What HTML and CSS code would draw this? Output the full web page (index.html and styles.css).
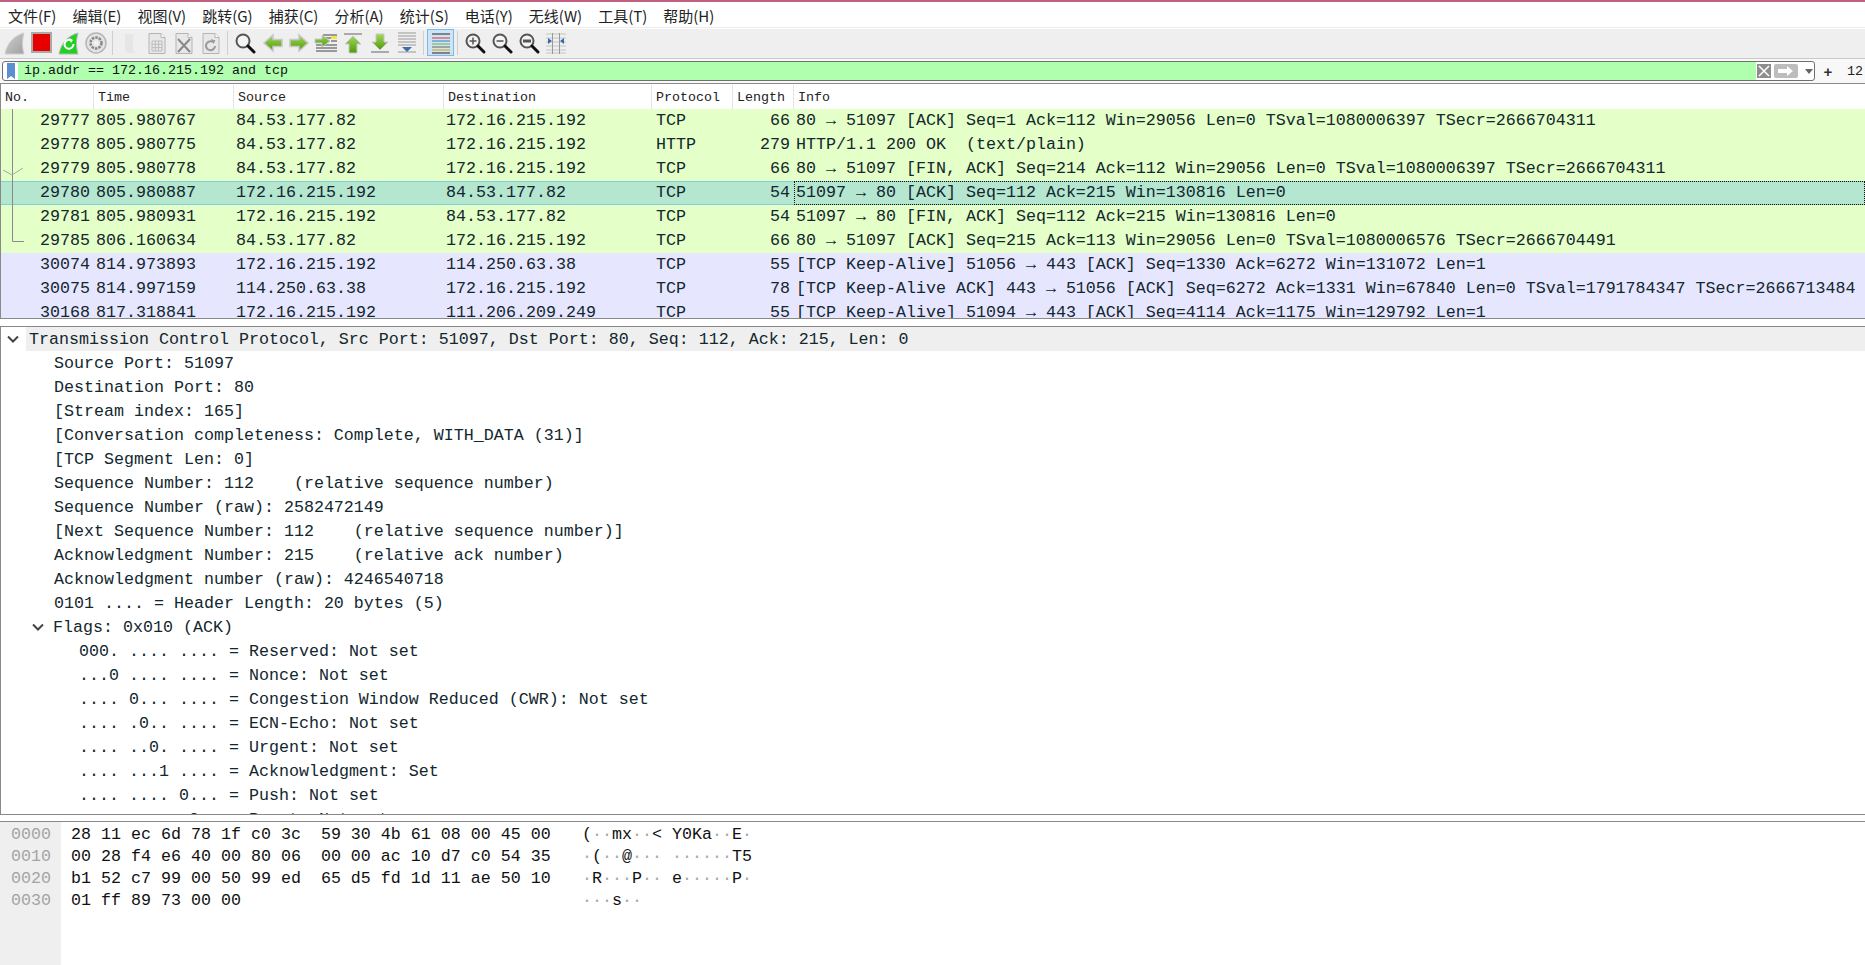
FILE: index.html
```html
<!DOCTYPE html>
<html lang="zh">
<head>
<meta charset="utf-8">
<title>Wireshark</title>
<link rel="stylesheet" href="styles.css">
</head>
<body>
<svg class="defs" width="0" height="0">
  <defs>
    <linearGradient id="gGreen" x1="0" y1="0" x2="0" y2="1"><stop offset="0" stop-color="#a4d65e"/><stop offset="1" stop-color="#4f9a06"/></linearGradient>
    <linearGradient id="gFin" x1="0" y1="0" x2="1" y2="1"><stop offset="0" stop-color="#d0d0d0"/><stop offset="1" stop-color="#a0a0a0"/></linearGradient>
    <g id="glass"><circle cx="10" cy="10" r="6.5" fill="#f4f4f4" stroke="#555" stroke-width="2"/><path d="M15 15l6 6" stroke="#111" stroke-width="3" stroke-linecap="round"/></g>
    <g id="doc"><path d="M4 2.500h12l4 4v16H4z" fill="#e8e8e8" stroke="#b4b4b4"/><path d="M16 2.500v4h4" fill="#fff" stroke="#b4b4b4"/></g>
    <path id="arrowR" d="M1 8.500h9V4l9 8-9 8v-4.500H1z" fill="url(#gGreen)" stroke="#c8c8c8" stroke-width="1.500"/>
  </defs>
</svg>
<div class="topline"></div>
<nav class="menu">
  <span class="menu-item">文件(F)</span><span class="menu-item">编辑(E)</span><span class="menu-item">视图(V)</span><span class="menu-item">跳转(G)</span><span class="menu-item">捕获(C)</span><span class="menu-item">分析(A)</span><span class="menu-item">统计(S)</span><span class="menu-item">电话(Y)</span><span class="menu-item">无线(W)</span><span class="menu-item">工具(T)</span><span class="menu-item">帮助(H)</span>
</nav>
<div class="toolbar">
  <span class="tool"><svg width="24" height="24" viewBox="0 0 24 24"><path d="M2 23C4 13 10 5 21 2c-2 7-2 14 0 21z" fill="url(#gFin)" stroke="#cfcfcf"/></svg></span>
  <span class="tool"><svg width="24" height="24" viewBox="0 0 24 24"><rect x="2" y="2" width="19" height="19" fill="#e60000" stroke="#aaa" stroke-width="2"/></svg></span>
  <span class="tool"><svg width="24" height="24" viewBox="0 0 24 24"><path d="M2 23C4 13 10 5 21 2c-2 7-2 14 0 21z" fill="#22cf22" stroke="#b8b8b8"/><path d="M16.500 13a4.500 4.500 0 1 1-2-3.500" fill="none" stroke="#fff" stroke-width="2"/><path d="M12 7l4 2-2 3z" fill="#fff"/></svg></span>
  <span class="tool"><svg width="24" height="24" viewBox="0 0 24 24"><circle cx="12" cy="12" r="10" fill="#e4e4e4" stroke="#b5b5b5" stroke-width="1.500"/><circle cx="12" cy="12" r="5.500" fill="none" stroke="#888" stroke-width="2.500" stroke-dasharray="2.500 1"/><circle cx="12" cy="12" r="2.500" fill="#f2f2f2"/></svg></span>
  <span class="sep"></span>
  <span class="tool"><svg width="24" height="24" viewBox="0 0 24 24"><path d="M7 3h10l-2 3v13l2 3H9l-2-3z" fill="#e6e6e6"/></svg></span>
  <span class="tool"><svg width="24" height="24" viewBox="0 0 24 24"><use href="#doc"/><path d="M7 10h10v10H7zM7 13.300h10M7 16.600h10M10.300 10v10M13.600 10v10" fill="none" stroke="#b4b4b4" stroke-width=".8"/></svg></span>
  <span class="tool"><svg width="24" height="24" viewBox="0 0 24 24"><use href="#doc"/><path d="M6 8l12 13M18 8L6 21" stroke="#888" stroke-width="2"/></svg></span>
  <span class="tool"><svg width="24" height="24" viewBox="0 0 24 24"><use href="#doc"/><path d="M16 15a4.500 4.500 0 1 1-2-4" fill="none" stroke="#999" stroke-width="2"/><path d="M12 8l4.500 1.500-2 3.500z" fill="#999"/></svg></span>
  <span class="sep"></span>
  <span class="tool"><svg width="24" height="24" viewBox="0 0 24 24"><use href="#glass"/></svg></span>
  <span class="tool"><svg width="24" height="24" viewBox="0 0 24 24"><use href="#arrowR" transform="translate(23 0) scale(-1 1)"/></svg></span>
  <span class="tool"><svg width="24" height="24" viewBox="0 0 24 24"><use href="#arrowR" x="2"/></svg></span>
  <span class="tool"><svg width="24" height="24" viewBox="0 0 24 24"><path d="M9 4h14M9 7h14M9 10h3M17 10h6M2 14h21M2 17h21M2 20h21" stroke="#444" stroke-width="1.200"/><path d="M17 5h6v3h-6z" fill="#f2e34c"/><path d="M1 8h7V4l8 6-8 6v-4H1z" fill="url(#gGreen)" stroke="#c8c8c8"/></svg></span>
  <span class="tool"><svg width="24" height="24" viewBox="0 0 24 24"><path d="M3 3h18" stroke="#aaa" stroke-width="2"/><path d="M12 5l8 8h-4v9H8v-9H4z" fill="url(#gGreen)" stroke="#c8c8c8"/></svg></span>
  <span class="tool"><svg width="24" height="24" viewBox="0 0 24 24"><path d="M3 21h18" stroke="#aaa" stroke-width="2"/><path d="M12 19l8-8h-4V3H8v8H4z" fill="url(#gGreen)" stroke="#c8c8c8"/></svg></span>
  <span class="tool"><svg width="24" height="24" viewBox="0 0 24 24"><path d="M3 2h18M3 5h18M3 8h18M3 11h18M3 14h18M3 21h18" stroke="#999"/><path d="M7 16h10l-5 5z" fill="#3a6ea5"/></svg></span>
  <span class="sep"></span>
  <span class="tool tool-on"><svg width="24" height="24" viewBox="0 0 24 24"><path d="M3 3h18" stroke="#444" stroke-width="1.200"/><path d="M3 7h18" stroke="#e05050" stroke-width="1.200"/><path d="M3 10h18" stroke="#5588cc" stroke-width="1.200"/><path d="M3 13h18" stroke="#7fc040" stroke-width="1.200"/><path d="M3 16h18" stroke="#777" stroke-width="1.200"/><path d="M3 19h18" stroke="#d8a820" stroke-width="1.200"/><path d="M3 22h18" stroke="#444" stroke-width="1.200"/></svg></span>
  <span class="sep"></span>
  <span class="tool"><svg width="24" height="24" viewBox="0 0 24 24"><use href="#glass"/><path d="M6.500 10h7M10 6.500v7" stroke="#555" stroke-width="1.500"/></svg></span>
  <span class="tool"><svg width="24" height="24" viewBox="0 0 24 24"><use href="#glass"/><path d="M6.500 10h7" stroke="#555" stroke-width="1.500"/></svg></span>
  <span class="tool"><svg width="24" height="24" viewBox="0 0 24 24"><use href="#glass"/><path d="M6 10h8" stroke="#555" stroke-width="3"/></svg></span>
  <span class="tool"><svg width="24" height="24" viewBox="0 0 24 24"><path d="M2 3h20M2 7h20M2 11h20M2 15h20M2 19h20M2 22h20" stroke="#c4c4c4"/><path d="M8.500 2v21M15.500 2v21" stroke="#999"/><path d="M4 7l4 3-4 3zM20 7l-4 3 4 3z" fill="#2f6fb0"/></svg></span>
</div>
<div class="filterbar">
  <div class="filter">
    <span class="bookmark"><svg width="10" height="16" viewBox="0 0 10 16"><path d="M1 0h8v16l-4-3-4 3z" fill="#5b8fd0"/></svg></span>
    <span class="filter-text">ip.addr == 172.16.215.192 and tcp</span>
    <span class="filter-btn"><svg width="14" height="14" viewBox="0 0 14 14"><rect width="14" height="14" fill="#8e8e8e"/><path d="M2 2l10 10M12 2L2 12" stroke="#fff" stroke-width="1.500"/></svg></span>
    <span class="filter-btn filter-go"><svg width="24" height="14" viewBox="0 0 24 14"><rect width="24" height="14" rx="2" fill="#bdbdbd"/><path d="M4 5h9V2l6 5-6 5V9H4z" fill="#fff"/></svg></span>
    <span class="filter-btn filter-drop"><svg width="8" height="5" viewBox="0 0 8 5"><path d="M0 0h8L4 5z" fill="#666"/></svg></span>
  </div>
  <span class="plus">+</span>
  <span class="twelve">12</span>
</div>
<section class="packets">
  <div class="pk-head"><span class="h">No.</span><span class="h">Time</span><span class="h">Source</span><span class="h">Destination</span><span class="h">Protocol</span><span class="h">Length</span><span class="h">Info</span></div>
  <div class="pk-body">
    <svg class="conv" width="26" height="134" viewBox="0 0 26 134"><path d="M12.500 0v132.500H24" fill="none" stroke="#8a8a8a"/><path d="M3 61l9 5 11-7" fill="none" stroke="#a9a9a9"/></svg>
    <div class="pk-row green"><span class="c num">29777</span><span class="c">805.980767</span><span class="c">84.53.177.82</span><span class="c">172.16.215.192</span><span class="c">TCP</span><span class="c num">66</span><span class="c">80 → 51097 [ACK] Seq=1 Ack=112 Win=29056 Len=0 TSval=1080006397 TSecr=2666704311</span></div>
    <div class="pk-row green"><span class="c num">29778</span><span class="c">805.980775</span><span class="c">84.53.177.82</span><span class="c">172.16.215.192</span><span class="c">HTTP</span><span class="c num">279</span><span class="c">HTTP/1.1 200 OK  (text/plain)</span></div>
    <div class="pk-row green"><span class="c num">29779</span><span class="c">805.980778</span><span class="c">84.53.177.82</span><span class="c">172.16.215.192</span><span class="c">TCP</span><span class="c num">66</span><span class="c">80 → 51097 [FIN, ACK] Seq=214 Ack=112 Win=29056 Len=0 TSval=1080006397 TSecr=2666704311</span></div>
    <div class="pk-row selected"><span class="c num">29780</span><span class="c">805.980887</span><span class="c">172.16.215.192</span><span class="c">84.53.177.82</span><span class="c">TCP</span><span class="c num">54</span><span class="c focus">51097 → 80 [ACK] Seq=112 Ack=215 Win=130816 Len=0</span></div>
    <div class="pk-row green"><span class="c num">29781</span><span class="c">805.980931</span><span class="c">172.16.215.192</span><span class="c">84.53.177.82</span><span class="c">TCP</span><span class="c num">54</span><span class="c">51097 → 80 [FIN, ACK] Seq=112 Ack=215 Win=130816 Len=0</span></div>
    <div class="pk-row green"><span class="c num">29785</span><span class="c">806.160634</span><span class="c">84.53.177.82</span><span class="c">172.16.215.192</span><span class="c">TCP</span><span class="c num">66</span><span class="c">80 → 51097 [ACK] Seq=215 Ack=113 Win=29056 Len=0 TSval=1080006576 TSecr=2666704491</span></div>
    <div class="pk-row blue"><span class="c num">30074</span><span class="c">814.973893</span><span class="c">172.16.215.192</span><span class="c">114.250.63.38</span><span class="c">TCP</span><span class="c num">55</span><span class="c">[TCP Keep-Alive] 51056 → 443 [ACK] Seq=1330 Ack=6272 Win=131072 Len=1</span></div>
    <div class="pk-row blue"><span class="c num">30075</span><span class="c">814.997159</span><span class="c">114.250.63.38</span><span class="c">172.16.215.192</span><span class="c">TCP</span><span class="c num">78</span><span class="c">[TCP Keep-Alive ACK] 443 → 51056 [ACK] Seq=6272 Ack=1331 Win=67840 Len=0 TSval=1791784347 TSecr=2666713484</span></div>
    <div class="pk-row blue"><span class="c num">30168</span><span class="c">817.318841</span><span class="c">172.16.215.192</span><span class="c">111.206.209.249</span><span class="c">TCP</span><span class="c num">55</span><span class="c">[TCP Keep-Alive] 51094 → 443 [ACK] Seq=4114 Ack=1175 Win=129792 Len=1</span></div>
  </div>
</section>
<section class="details">
  <div class="d-row l0"><svg class="chev" width="12" height="8" viewBox="0 0 12 8"><path d="M1 1.500l5 5 5-5" fill="none" stroke="#444" stroke-width="2"/></svg><span class="d-text shaded">Transmission Control Protocol, Src Port: 51097, Dst Port: 80, Seq: 112, Ack: 215, Len: 0</span></div>
  <div class="d-row l1">Source Port: 51097</div>
  <div class="d-row l1">Destination Port: 80</div>
  <div class="d-row l1">[Stream index: 165]</div>
  <div class="d-row l1">[Conversation completeness: Complete, WITH_DATA (31)]</div>
  <div class="d-row l1">[TCP Segment Len: 0]</div>
  <div class="d-row l1">Sequence Number: 112    (relative sequence number)</div>
  <div class="d-row l1">Sequence Number (raw): 2582472149</div>
  <div class="d-row l1">[Next Sequence Number: 112    (relative sequence number)]</div>
  <div class="d-row l1">Acknowledgment Number: 215    (relative ack number)</div>
  <div class="d-row l1">Acknowledgment number (raw): 4246540718</div>
  <div class="d-row l1">0101 .... = Header Length: 20 bytes (5)</div>
  <div class="d-row l1c"><svg class="chev" width="12" height="8" viewBox="0 0 12 8"><path d="M1 1.500l5 5 5-5" fill="none" stroke="#444" stroke-width="2"/></svg><span class="d-text">Flags: 0x010 (ACK)</span></div>
  <div class="d-row l2">000. .... .... = Reserved: Not set</div>
  <div class="d-row l2">...0 .... .... = Nonce: Not set</div>
  <div class="d-row l2">.... 0... .... = Congestion Window Reduced (CWR): Not set</div>
  <div class="d-row l2">.... .0.. .... = ECN-Echo: Not set</div>
  <div class="d-row l2">.... ..0. .... = Urgent: Not set</div>
  <div class="d-row l2">.... ...1 .... = Acknowledgment: Set</div>
  <div class="d-row l2">.... .... 0... = Push: Not set</div>
  <div class="d-row l2">.... .... .0.. = Reset: Not set</div>
</section>
<section class="bytes">
  <div class="offsets">
    <div class="b-row">0000</div>
    <div class="b-row">0010</div>
    <div class="b-row">0020</div>
    <div class="b-row">0030</div>
  </div>
  <div class="hex">
    <div class="b-row">28 11 ec 6d 78 1f c0 3c  59 30 4b 61 08 00 45 00</div>
    <div class="b-row">00 28 f4 e6 40 00 80 06  00 00 ac 10 d7 c0 54 35</div>
    <div class="b-row">b1 52 c7 99 00 50 99 ed  65 d5 fd 1d 11 ae 50 10</div>
    <div class="b-row">01 ff 89 73 00 00</div>
  </div>
  <div class="ascii">
    <div class="b-row">(<i>··</i>mx<i>··</i>&lt; Y0Ka<i>··</i>E<i>·</i></div>
    <div class="b-row"><i>·</i>(<i>··</i>@<i>···</i> <i>······</i>T5</div>
    <div class="b-row"><i>·</i>R<i>···</i>P<i>··</i> e<i>·····</i>P<i>·</i></div>
    <div class="b-row"><i>···</i>s<i>··</i></div>
  </div>
</section>
</body>
</html>
```
FILE: styles.css
```css
* { box-sizing: border-box; }
html, body { margin: 0; padding: 0; height: 965px; overflow: hidden; background: #fff; }
body { font-family: "Liberation Mono", monospace; color: #12272e; }
.defs { display: block; height: 0; }

.topline { height: 2px; background: #c06080; }

.menu { display: flex; height: 26px; padding-top: 1px; background: #fff; border-bottom: 1px solid #ececec; font-family: "Noto Sans CJK SC", "Liberation Sans", sans-serif; font-size: 15px; line-height: 25px; color: #222; }
.menu-item { padding: 0 8px; white-space: nowrap; }

.toolbar { display: flex; align-items: center; height: 30px; margin-top: 1px; padding: 0 0 2px 1px; background: #efefef; border-bottom: 1px solid #c9c9c9; }
.tool { display: flex; align-items: center; justify-content: center; width: 27px; height: 27px; }
.tool-on { background: #cde4f7; box-shadow: inset 0 0 0 1px #7cb8ea; }
.sep { width: 7px; height: 24px; }
.sep::after { content: ""; display: block; width: 1px; height: 24px; margin-left: 3px; background: #cfcfcf; }

.filterbar { display: flex; align-items: center; height: 25px; padding: 3px 0 3px 2px; background: #f8f8f8; border-bottom: 1px solid #8a8a8a; }
.filter { display: flex; align-items: center; width: 1813px; height: 20px; background: #fff; border: 1px solid #6f6f6f; border-radius: 3px; flex: none; overflow: hidden; }
.bookmark { display: flex; align-items: center; justify-content: center; width: 15px; height: 18px; flex: none; }
.filter-text { display: block; width: 1738px; height: 18px; padding-left: 6px; flex: none; background: #afffaf; font-size: 13.33px; line-height: 18px; color: #111; white-space: pre; }
.filter-btn { display: flex; align-items: center; flex: none; margin-left: 1px; }
.filter-go { margin-left: 3px; }
.filter-drop { margin-left: 7px; }
.plus { flex: none; width: 26px; text-align: center; font-family: "Liberation Sans", sans-serif; font-weight: bold; font-size: 15px; color: #333; }
.twelve { flex: none; padding-left: 6px; font-size: 13.33px; color: #222; white-space: nowrap; }

.packets { height: 235px; overflow: hidden; background: #fff; border-left: 1px solid #8a8a8a; border-bottom: 1px solid #8a8a8a; }
.pk-head { display: grid; grid-template-columns: 93px 140px 210px 208px 81px 61px 1fr; height: 25px; padding-top: 1px; font-size: 13.33px; line-height: 26px; color: #222; background: #fff; white-space: pre; }
.h { padding-left: 4px; height: 24px; border-right: 1px solid #e4e4e4; }
.h:last-child { border-right: none; }
.pk-row { display: grid; grid-template-columns: 93px 140px 210px 210px 76px 64px 1fr; height: 24px; font-size: 16.67px; line-height: 24px; white-space: pre; }
.pk-body { position: relative; }
.conv { position: absolute; left: -1px; top: 0; }
.c { display: block; padding-left: 2px; min-width: 0; overflow: visible; }
.num { padding: 0 4px 0 0; text-align: right; }
.green { background: #e4ffc7; }
.blue { background: #e7e6ff; }
.selected { background: #b5e6d0; box-shadow: inset 0 1px 0 #80d0dc, inset 0 -1px 0 #80d0dc; }
.focus { outline: 1px dotted #111; outline-offset: -1px; }

.details { height: 489px; margin-top: 7px; overflow: hidden; background: #fff; border-top: 1px solid #8a8a8a; border-bottom: 1px solid #8a8a8a; border-left: 1px solid #8a8a8a; font-size: 16.67px; line-height: 26px; }
.d-row { height: 24px; white-space: pre; }
.l0, .l1c { display: flex; align-items: center; }
.l0 { padding-left: 6px; }
.l1c { padding-left: 31px; }
.chev { flex: none; }
.l0 .d-text { flex: 1; margin-left: 7px; padding-left: 3px; height: 24px; }
.l1c .d-text { margin-left: 9px; height: 24px; }
.shaded { background: #efefef; }
.l1 { padding-left: 53px; }
.l2 { padding-left: 78px; }

.bytes { display: flex; height: 144px; margin-top: 6px; border-top: 1px solid #8a8a8a; font-size: 16.67px; background: #fff; }
.b-row { height: 22px; line-height: 25px; white-space: pre; }
.offsets { flex: none; width: 61px; padding-left: 11px; background: #efefef; color: #a4a4a4; }
.hex { flex: none; width: 521px; padding-left: 10px; color: #111; }
.ascii { flex: 1; color: #111; }
.ascii i { font-style: normal; color: #a8a8a8; }
```
